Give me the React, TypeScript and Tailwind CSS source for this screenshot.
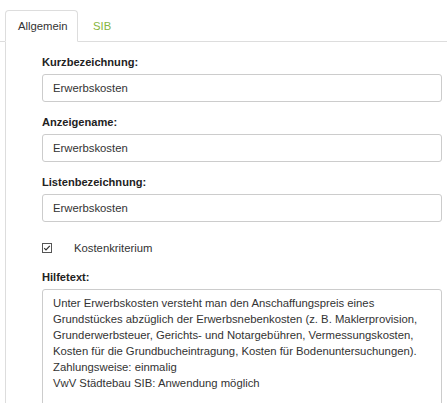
import { useState } from 'react'

const fields = [
  { label: 'Kurzbezeichnung:', value: 'Erwerbskosten' },
  { label: 'Anzeigename:', value: 'Erwerbskosten' },
  { label: 'Listenbezeichnung:', value: 'Erwerbskosten' },
]

const helpLines = [
  'Unter Erwerbskosten versteht man den Anschaffungspreis eines',
  'Grundstückes abzüglich der Erwerbsnebenkosten (z. B. Maklerprovision,',
  'Grunderwerbsteuer, Gerichts- und Notargebühren, Vermessungskosten,',
  'Kosten für die Grundbucheintragung, Kosten für Bodenuntersuchungen).',
  'Zahlungsweise: einmalig',
  'VwV Städtebau SIB: Anwendung möglich',
]

export default function App() {
  const [tab, setTab] = useState('Allgemein')
  const [checked, setChecked] = useState(true)

  return (
    <div className="h-[403px] overflow-hidden bg-white font-['Liberation_Sans',Arial,sans-serif] text-[11.3px] leading-[16px] text-[#333]">
      {/* Tabs */}
      <div className="flex pt-[10px] pl-[5px] border-b border-[#ddd]">
        {['Allgemein', 'SIB'].map((t) => (
          <button
            key={t}
            onClick={() => setTab(t)}
            className={
              t === tab
                ? 'h-[32px] w-[73px] -mb-px pl-[12px] text-left border border-[#ddd] border-b-white rounded-t-[4px] bg-white text-[#333]'
                : 'h-[31px] w-[50px] pl-[15px] text-left text-[#86b540]'
            }
          >
            {t}
          </button>
        ))}
      </div>

      {/* Panel */}
      <div className="ml-[5px] h-full border-l border-[#ddd] pl-[36px] pr-[5px] pt-[12px]">
        {fields.map((f) => (
          <div key={f.label} className="mb-[12px]">
            <div className="mb-[4px] text-[11.1px] font-bold text-[#222]">{f.label}</div>
            <div className="flex h-[28px] items-center rounded-[3px] border border-[#ccc] pl-[10px]">
              {f.value}
            </div>
          </div>
        ))}

        <div className="mt-[18px] flex h-[16px] items-center">
          <button
            onClick={() => setChecked(!checked)}
            className="flex h-[10px] w-[10px] items-center justify-center border border-[#555] bg-white"
          >
            {checked && (
              <svg width="8" height="8" viewBox="0 0 8 8">
                <path d="M1.2 4.2 L3 6 L6.8 1.8" fill="none" stroke="#333" strokeWidth="1.2" />
              </svg>
            )}
          </button>
          <span className="ml-[22px]">Kostenkriterium</span>
        </div>

        <div className="mt-[13px] mb-[4px] text-[11.1px] font-bold text-[#222]">Hilfetext:</div>
        <div className="h-[150px] rounded-[3px] border border-[#ccc] pl-[10px] pt-[5px]">
          {helpLines.map((l) => (
            <div key={l} className="whitespace-nowrap">
              {l}
            </div>
          ))}
        </div>
      </div>
    </div>
  )
}
